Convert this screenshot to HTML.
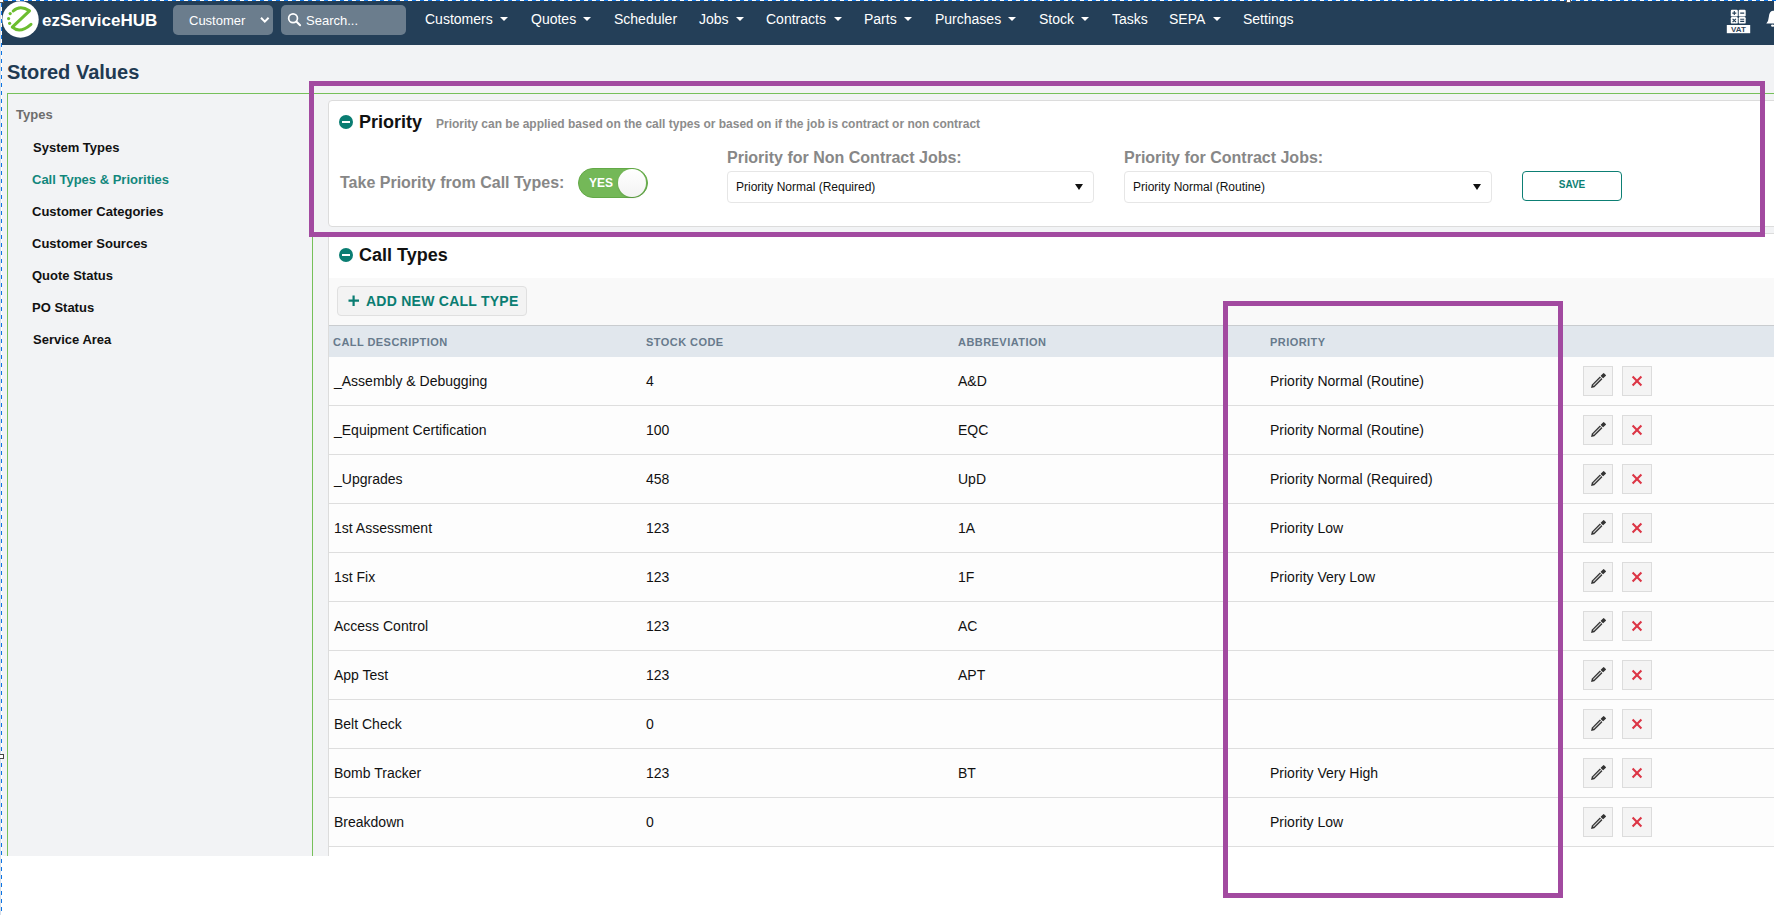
<!DOCTYPE html>
<html><head><meta charset="utf-8">
<style>
*{box-sizing:border-box;margin:0;padding:0}
html,body{width:1776px;height:915px;overflow:hidden;background:#fff;font-family:"Liberation Sans",sans-serif;position:relative}
.a{position:absolute;white-space:nowrap;line-height:1}
#page{position:absolute;left:0;top:0;width:1774px;height:856px;background:#f2f3f5;overflow:hidden}
#nav{position:absolute;left:0;top:0;width:1774px;height:45px;background:#243f58}
.nv{position:absolute;top:12px;color:#fff;font-size:14px;line-height:1}
.car{position:absolute;top:17px;width:0;height:0;border-left:4px solid transparent;border-right:4px solid transparent;border-top:4px solid #fff}
.sel{position:absolute;top:5px;height:30px;background:#6b7d8d;border-radius:5px}
.side{position:absolute;left:32px;font-size:13px;font-weight:bold;color:#111;line-height:1}
.card{position:absolute;background:#fff;border:1px solid #dcdcdc;border-radius:4px}
.minus{position:absolute;width:14px;height:14px;border-radius:50%;background:#0a7d72}
.minus:after{content:"";position:absolute;left:3px;top:6px;width:8px;height:2px;background:#fff}
.lbl{position:absolute;font-size:16px;font-weight:bold;color:#878787;line-height:1}
.dd{position:absolute;top:171px;height:32px;background:#fff;border:1px solid #e6e6e6;border-radius:4px}
.dd span{position:absolute;left:8px;top:9px;font-size:12px;color:#111;line-height:1}
.dd i{position:absolute;top:12px;width:0;height:0;border-left:4.5px solid transparent;border-right:4.5px solid transparent;border-top:6px solid #111}
.th{position:absolute;top:337px;font-size:11px;font-weight:bold;color:#677a8c;letter-spacing:.45px;line-height:1}
.row{position:absolute;left:329px;width:1445px;height:49px;border-bottom:1px solid #dedede;background:#fdfdfd}
.row span{position:absolute;top:17px;font-size:14px;color:#111;line-height:1}
.btn{position:absolute;top:9px;width:30px;height:30px;background:#f4f4f4;border:1px solid #dcdcdc}
.purp{position:absolute;border:5px solid #a24aa0}
</style></head><body>
<div id="page">
 <div id="nav">
  <!-- logo -->
  <svg class="a" style="left:0;top:0" width="42" height="42" viewBox="0 0 42 42">
   <circle cx="20.5" cy="19.5" r="18.2" fill="#fff"/>
   <path d="M13.2,11 Q20,4.5 29.5,10.8 L12.3,27.2 Q20,34 31,24.3" fill="none" stroke="#6cbd2f" stroke-width="3" stroke-linecap="round" stroke-linejoin="round"/>
   <circle cx="10.2" cy="13.6" r="1.6" fill="#6cbd2f"/>
   <circle cx="8.6" cy="18.6" r="1.6" fill="#6cbd2f"/>
   <circle cx="9.6" cy="23.3" r="1.6" fill="#6cbd2f"/>
  </svg>
  <div class="a" style="left:42px;top:11.6px;font-size:17px;font-weight:bold;color:#fff">ezServiceHUB</div>
  <div class="sel" style="left:173px;width:100px"></div>
  <div class="a" style="left:189px;top:14.2px;font-size:13px;color:#fff">Customer</div>
  <svg class="a" style="left:259px;top:16px" width="12" height="9" viewBox="0 0 12 9"><path d="M2,1.8 L5.8,5.6 L9.6,1.8" fill="none" stroke="#fff" stroke-width="2"/></svg>
  <div class="sel" style="left:281px;width:125px"></div>
  <svg class="a" style="left:287px;top:12px" width="16" height="16" viewBox="0 0 16 16"><circle cx="6.05" cy="6.2" r="4.4" fill="none" stroke="#fff" stroke-width="1.7"/><path d="M9.3,9.5 L13.1,13.3" stroke="#fff" stroke-width="2" stroke-linecap="round"/></svg>
  <div class="a" style="left:306px;top:14.2px;font-size:13px;color:#fff">Search...</div>

  <div class="nv" style="left:425px">Customers</div><div class="car" style="left:500px"></div>
  <div class="nv" style="left:531px">Quotes</div><div class="car" style="left:583px"></div>
  <div class="nv" style="left:614px">Scheduler</div>
  <div class="nv" style="left:699px">Jobs</div><div class="car" style="left:736px"></div>
  <div class="nv" style="left:766px">Contracts</div><div class="car" style="left:834px"></div>
  <div class="nv" style="left:864px">Parts</div><div class="car" style="left:904px"></div>
  <div class="nv" style="left:935px">Purchases</div><div class="car" style="left:1008px"></div>
  <div class="nv" style="left:1039px">Stock</div><div class="car" style="left:1081px"></div>
  <div class="nv" style="left:1112px">Tasks</div>
  <div class="nv" style="left:1169px">SEPA</div><div class="car" style="left:1213px"></div>
  <div class="nv" style="left:1243px">Settings</div>

  <!-- VAT icon -->
  <svg class="a" style="left:1726px;top:9px" width="26" height="26" viewBox="0 0 26 26">
   <rect x="4.8" y="0.8" width="7" height="6.6" rx="1.2" fill="#fff"/>
   <rect x="12.7" y="0.8" width="7" height="6.6" rx="1.2" fill="#fff"/>
   <rect x="4.8" y="8" width="7" height="6.6" rx="1.2" fill="#fff"/>
   <rect x="12.7" y="8" width="7" height="6.6" rx="1.2" fill="#fff"/>
   <path d="M6.3,4.1 H10.3 M8.3,2.1 V6.1 M14.2,4.1 H18.2 M6.6,9.8 L9.9,13 M9.9,9.8 L6.6,13 M14.2,10.3 H18.2 M14.2,12.4 H18.2" stroke="#243f58" stroke-width="1.1"/>
   <rect x="0.8" y="16" width="23.4" height="8.2" fill="#fff"/>
   <text x="12.5" y="23" text-anchor="middle" font-family="Liberation Sans" font-weight="bold" font-size="8" fill="#34465a">VAT</text>
  </svg>
  <!-- bell partial -->
  <svg class="a" style="left:1764px;top:9px" width="12" height="20" viewBox="0 0 12 20">
   <path d="M2.3,14.6 Q4.6,12 4.9,7.5 Q5.3,2.4 8.8,1.8 L12,1.8 L12,14.6 Z" fill="#fff"/><ellipse cx="8.6" cy="16.6" rx="1.6" ry="1.2" fill="#fff"/>
  </svg>
 </div>

 <div class="a" style="left:7px;top:62px;font-size:20px;font-weight:bold;color:#1f3a52">Stored Values</div>

 <!-- green container -->
 <div class="a" style="left:7px;top:93px;width:1767px;height:800px;border-top:1px solid #76c05a;border-left:1px solid #76c05a"></div>
 <div class="a" style="left:312px;top:93px;width:1px;height:800px;background:#76c05a"></div>

 <div class="a" style="left:16px;top:107.7px;font-size:13px;font-weight:bold;color:#6d6d6d">Types</div>
 <div class="side" style="top:141px;left:33px">System Types</div>
 <div class="side" style="top:173px;color:#12877c">Call Types &amp; Priorities</div>
 <div class="side" style="top:205px">Customer Categories</div>
 <div class="side" style="top:237px">Customer Sources</div>
 <div class="side" style="top:269px">Quote Status</div>
 <div class="side" style="top:301px">PO Status</div>
 <div class="side" style="top:333px;left:33px">Service Area</div>

 <!-- Priority card -->
 <div class="card" style="left:328px;top:100px;width:1460px;height:127px"></div>
 <div class="minus" style="left:339px;top:115px"></div>
 <div class="a" style="left:359px;top:112.6px;font-size:18px;font-weight:bold;color:#111">Priority</div>
 <div class="a" style="left:436px;top:117.8px;font-size:12px;font-weight:bold;color:#8c8c8c">Priority can be applied based on the call types or based on if the job is contract or non contract</div>
 <div class="lbl" style="left:340px;top:175.2px">Take Priority from Call Types:</div>
 <!-- toggle -->
 <div class="a" style="left:578px;top:168px;width:70px;height:30px;border-radius:15px;background:#74b858;border:1px solid #63a947"></div>
 <div class="a" style="left:589px;top:177px;font-size:12px;font-weight:bold;color:#fff">YES</div>
 <div class="a" style="left:618px;top:169px;width:28px;height:28px;border-radius:50%;background:linear-gradient(#fff,#f3f3f3);box-shadow:0 1px 2px rgba(0,0,0,.15)"></div>

 <div class="lbl" style="left:727px;top:149.8px">Priority for Non Contract Jobs:</div>
 <div class="dd" style="left:727px;width:367px"><span>Priority Normal (Required)</span><i style="left:347px"></i></div>
 <div class="lbl" style="left:1124px;top:149.8px">Priority for Contract Jobs:</div>
 <div class="dd" style="left:1124px;width:368px"><span>Priority Normal (Routine)</span><i style="left:348px"></i></div>
 <div class="a" style="left:1522px;top:171px;width:100px;height:30px;border:1.5px solid #0d7f74;border-radius:4px;background:#fff"></div>
 <div class="a" style="left:1522px;top:180.4px;width:100px;text-align:center;font-size:10px;font-weight:bold;color:#0d7f74">SAVE</div>

 <!-- Call types card -->
 <div class="card" style="left:328px;top:233px;width:1460px;height:700px;border-radius:4px 4px 0 0"></div>
 <div class="minus" style="left:339px;top:248px"></div>
 <div class="a" style="left:359px;top:245.6px;font-size:18px;font-weight:bold;color:#111">Call Types</div>
 <div class="a" style="left:329px;top:278px;width:1445px;height:48px;background:#f9f9f9;border-bottom:1px solid #c9cccf"></div>
 <div class="a" style="left:337px;top:286px;width:190px;height:30px;background:#f3f3f3;border:1px solid #e0e0e0;border-radius:4px"></div>
 <svg class="a" style="left:348px;top:295px" width="12" height="12" viewBox="0 0 12 12"><path d="M5.6,0.5 V11 M0.5,5.6 H11" stroke="#0a7d72" stroke-width="2.2"/></svg>
 <div class="a" style="left:366px;top:294.2px;font-size:14px;font-weight:bold;color:#0a7d72;letter-spacing:.25px">ADD NEW CALL TYPE</div>
 <div class="a" style="left:329px;top:326px;width:1445px;height:31px;background:#e1e7ed"></div>
 <div class="th" style="left:333px">CALL DESCRIPTION</div>
 <div class="th" style="left:646px">STOCK CODE</div>
 <div class="th" style="left:958px">ABBREVIATION</div>
 <div class="th" style="left:1270px">PRIORITY</div>

 <!--ROWS--><div id="rows">
<div class="row" style="top:357px"><span style="left:5px">_Assembly &amp; Debugging</span><span style="left:317px">4</span><span style="left:629px">A&amp;D</span><span style="left:941px">Priority Normal (Routine)</span><div class="btn" style="left:1254px"><svg width="30" height="30" viewBox="0 0 30 30" style="position:absolute;left:-1px;top:-1px"><g transform="rotate(-45 15 15)"><path d="M5.2,15 L8,13.2 H19.4 V16.8 H8 Z" fill="#333"/><rect x="8.4" y="14.4" width="10.6" height="1.2" fill="#cfcfcf"/><rect x="20.4" y="13.2" width="4.4" height="3.6" rx="0.5" fill="#333"/></g></svg></div><div class="btn" style="left:1293px"><svg width="30" height="30" viewBox="0 0 30 30" style="position:absolute;left:-1px;top:-1px"><path d="M10.6,10.6 L19.4,19.4 M19.4,10.6 L10.6,19.4" stroke="#dc3545" stroke-width="2.1"/></svg></div></div>
<div class="row" style="top:406px"><span style="left:5px">_Equipment Certification</span><span style="left:317px">100</span><span style="left:629px">EQC</span><span style="left:941px">Priority Normal (Routine)</span><div class="btn" style="left:1254px"><svg width="30" height="30" viewBox="0 0 30 30" style="position:absolute;left:-1px;top:-1px"><g transform="rotate(-45 15 15)"><path d="M5.2,15 L8,13.2 H19.4 V16.8 H8 Z" fill="#333"/><rect x="8.4" y="14.4" width="10.6" height="1.2" fill="#cfcfcf"/><rect x="20.4" y="13.2" width="4.4" height="3.6" rx="0.5" fill="#333"/></g></svg></div><div class="btn" style="left:1293px"><svg width="30" height="30" viewBox="0 0 30 30" style="position:absolute;left:-1px;top:-1px"><path d="M10.6,10.6 L19.4,19.4 M19.4,10.6 L10.6,19.4" stroke="#dc3545" stroke-width="2.1"/></svg></div></div>
<div class="row" style="top:455px"><span style="left:5px">_Upgrades</span><span style="left:317px">458</span><span style="left:629px">UpD</span><span style="left:941px">Priority Normal (Required)</span><div class="btn" style="left:1254px"><svg width="30" height="30" viewBox="0 0 30 30" style="position:absolute;left:-1px;top:-1px"><g transform="rotate(-45 15 15)"><path d="M5.2,15 L8,13.2 H19.4 V16.8 H8 Z" fill="#333"/><rect x="8.4" y="14.4" width="10.6" height="1.2" fill="#cfcfcf"/><rect x="20.4" y="13.2" width="4.4" height="3.6" rx="0.5" fill="#333"/></g></svg></div><div class="btn" style="left:1293px"><svg width="30" height="30" viewBox="0 0 30 30" style="position:absolute;left:-1px;top:-1px"><path d="M10.6,10.6 L19.4,19.4 M19.4,10.6 L10.6,19.4" stroke="#dc3545" stroke-width="2.1"/></svg></div></div>
<div class="row" style="top:504px"><span style="left:5px">1st Assessment</span><span style="left:317px">123</span><span style="left:629px">1A</span><span style="left:941px">Priority Low</span><div class="btn" style="left:1254px"><svg width="30" height="30" viewBox="0 0 30 30" style="position:absolute;left:-1px;top:-1px"><g transform="rotate(-45 15 15)"><path d="M5.2,15 L8,13.2 H19.4 V16.8 H8 Z" fill="#333"/><rect x="8.4" y="14.4" width="10.6" height="1.2" fill="#cfcfcf"/><rect x="20.4" y="13.2" width="4.4" height="3.6" rx="0.5" fill="#333"/></g></svg></div><div class="btn" style="left:1293px"><svg width="30" height="30" viewBox="0 0 30 30" style="position:absolute;left:-1px;top:-1px"><path d="M10.6,10.6 L19.4,19.4 M19.4,10.6 L10.6,19.4" stroke="#dc3545" stroke-width="2.1"/></svg></div></div>
<div class="row" style="top:553px"><span style="left:5px">1st Fix</span><span style="left:317px">123</span><span style="left:629px">1F</span><span style="left:941px">Priority Very Low</span><div class="btn" style="left:1254px"><svg width="30" height="30" viewBox="0 0 30 30" style="position:absolute;left:-1px;top:-1px"><g transform="rotate(-45 15 15)"><path d="M5.2,15 L8,13.2 H19.4 V16.8 H8 Z" fill="#333"/><rect x="8.4" y="14.4" width="10.6" height="1.2" fill="#cfcfcf"/><rect x="20.4" y="13.2" width="4.4" height="3.6" rx="0.5" fill="#333"/></g></svg></div><div class="btn" style="left:1293px"><svg width="30" height="30" viewBox="0 0 30 30" style="position:absolute;left:-1px;top:-1px"><path d="M10.6,10.6 L19.4,19.4 M19.4,10.6 L10.6,19.4" stroke="#dc3545" stroke-width="2.1"/></svg></div></div>
<div class="row" style="top:602px"><span style="left:5px">Access Control</span><span style="left:317px">123</span><span style="left:629px">AC</span><span style="left:941px"></span><div class="btn" style="left:1254px"><svg width="30" height="30" viewBox="0 0 30 30" style="position:absolute;left:-1px;top:-1px"><g transform="rotate(-45 15 15)"><path d="M5.2,15 L8,13.2 H19.4 V16.8 H8 Z" fill="#333"/><rect x="8.4" y="14.4" width="10.6" height="1.2" fill="#cfcfcf"/><rect x="20.4" y="13.2" width="4.4" height="3.6" rx="0.5" fill="#333"/></g></svg></div><div class="btn" style="left:1293px"><svg width="30" height="30" viewBox="0 0 30 30" style="position:absolute;left:-1px;top:-1px"><path d="M10.6,10.6 L19.4,19.4 M19.4,10.6 L10.6,19.4" stroke="#dc3545" stroke-width="2.1"/></svg></div></div>
<div class="row" style="top:651px"><span style="left:5px">App Test</span><span style="left:317px">123</span><span style="left:629px">APT</span><span style="left:941px"></span><div class="btn" style="left:1254px"><svg width="30" height="30" viewBox="0 0 30 30" style="position:absolute;left:-1px;top:-1px"><g transform="rotate(-45 15 15)"><path d="M5.2,15 L8,13.2 H19.4 V16.8 H8 Z" fill="#333"/><rect x="8.4" y="14.4" width="10.6" height="1.2" fill="#cfcfcf"/><rect x="20.4" y="13.2" width="4.4" height="3.6" rx="0.5" fill="#333"/></g></svg></div><div class="btn" style="left:1293px"><svg width="30" height="30" viewBox="0 0 30 30" style="position:absolute;left:-1px;top:-1px"><path d="M10.6,10.6 L19.4,19.4 M19.4,10.6 L10.6,19.4" stroke="#dc3545" stroke-width="2.1"/></svg></div></div>
<div class="row" style="top:700px"><span style="left:5px">Belt Check</span><span style="left:317px">0</span><span style="left:629px"></span><span style="left:941px"></span><div class="btn" style="left:1254px"><svg width="30" height="30" viewBox="0 0 30 30" style="position:absolute;left:-1px;top:-1px"><g transform="rotate(-45 15 15)"><path d="M5.2,15 L8,13.2 H19.4 V16.8 H8 Z" fill="#333"/><rect x="8.4" y="14.4" width="10.6" height="1.2" fill="#cfcfcf"/><rect x="20.4" y="13.2" width="4.4" height="3.6" rx="0.5" fill="#333"/></g></svg></div><div class="btn" style="left:1293px"><svg width="30" height="30" viewBox="0 0 30 30" style="position:absolute;left:-1px;top:-1px"><path d="M10.6,10.6 L19.4,19.4 M19.4,10.6 L10.6,19.4" stroke="#dc3545" stroke-width="2.1"/></svg></div></div>
<div class="row" style="top:749px"><span style="left:5px">Bomb Tracker</span><span style="left:317px">123</span><span style="left:629px">BT</span><span style="left:941px">Priority Very High</span><div class="btn" style="left:1254px"><svg width="30" height="30" viewBox="0 0 30 30" style="position:absolute;left:-1px;top:-1px"><g transform="rotate(-45 15 15)"><path d="M5.2,15 L8,13.2 H19.4 V16.8 H8 Z" fill="#333"/><rect x="8.4" y="14.4" width="10.6" height="1.2" fill="#cfcfcf"/><rect x="20.4" y="13.2" width="4.4" height="3.6" rx="0.5" fill="#333"/></g></svg></div><div class="btn" style="left:1293px"><svg width="30" height="30" viewBox="0 0 30 30" style="position:absolute;left:-1px;top:-1px"><path d="M10.6,10.6 L19.4,19.4 M19.4,10.6 L10.6,19.4" stroke="#dc3545" stroke-width="2.1"/></svg></div></div>
<div class="row" style="top:798px"><span style="left:5px">Breakdown</span><span style="left:317px">0</span><span style="left:629px"></span><span style="left:941px">Priority Low</span><div class="btn" style="left:1254px"><svg width="30" height="30" viewBox="0 0 30 30" style="position:absolute;left:-1px;top:-1px"><g transform="rotate(-45 15 15)"><path d="M5.2,15 L8,13.2 H19.4 V16.8 H8 Z" fill="#333"/><rect x="8.4" y="14.4" width="10.6" height="1.2" fill="#cfcfcf"/><rect x="20.4" y="13.2" width="4.4" height="3.6" rx="0.5" fill="#333"/></g></svg></div><div class="btn" style="left:1293px"><svg width="30" height="30" viewBox="0 0 30 30" style="position:absolute;left:-1px;top:-1px"><path d="M10.6,10.6 L19.4,19.4 M19.4,10.6 L10.6,19.4" stroke="#dc3545" stroke-width="2.1"/></svg></div></div>
</div><!--/ROWS-->
</div>
<!--OVERLAY-->
<div class="purp" style="left:309px;top:81px;width:1456px;height:156px"></div>
<div class="purp" style="left:1223px;top:301px;width:340px;height:597px"></div>
<div class="a" style="left:0;top:0;width:1776px;height:1px;background:repeating-linear-gradient(90deg,#fff 0 4px,#0b74e4 4px 8px)"></div>
<div class="a" style="left:0;top:0;width:1px;height:915px;background:#d6dee9"></div>
<div class="a" style="left:1px;top:0;width:1px;height:915px;background:repeating-linear-gradient(180deg,#fff 0 3px,#0b74e4 3px 7px,#fff 7px 8px)"></div>
<div class="a" style="left:0;top:0;width:4px;height:3px;background:#fff;border-right:1px solid #555;border-bottom:1px solid #555"></div>
<div class="a" style="left:1566px;top:0;width:5px;height:3px;background:#fff;border:1px solid #555;border-top:0"></div>
<div class="a" style="left:0;top:754px;width:4px;height:5px;background:#fff;border:1px solid #444;border-left:0"></div>
<!--/OVERLAY-->
</body></html>
